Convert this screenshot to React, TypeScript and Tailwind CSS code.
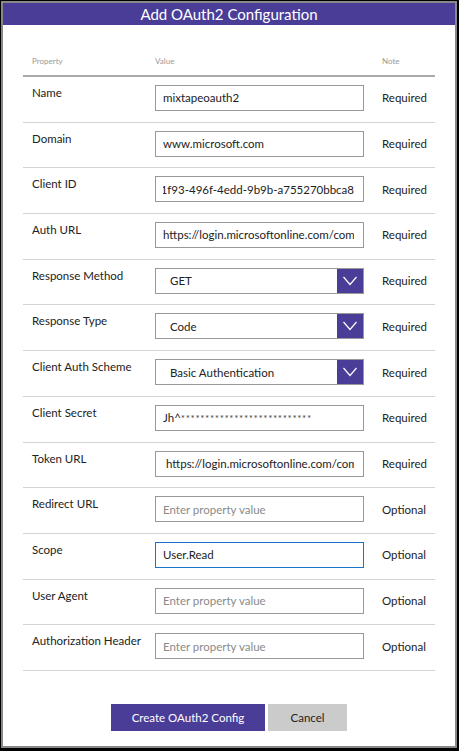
import React from 'react';

type Row = {
  label: string;
  value?: string;
  kind?: 'input' | 'select' | 'secret';
  note: 'Required' | 'Optional';
  alignEnd?: boolean;
  focused?: boolean;
  indent?: boolean;
};

const rows: Row[] = [
  { label: 'Name', value: 'mixtapeoauth2', note: 'Required' },
  { label: 'Domain', value: 'www.microsoft.com', note: 'Required' },
  { label: 'Client ID', value: 'b6521f93-496f-4edd-9b9b-a755270bbca8', note: 'Required', alignEnd: true },
  { label: 'Auth URL', value: 'https://login.microsoftonline.com/common', note: 'Required' },
  { label: 'Response Method', value: 'GET', kind: 'select', note: 'Required' },
  { label: 'Response Type', value: 'Code', kind: 'select', note: 'Required' },
  { label: 'Client Auth Scheme', value: 'Basic Authentication', kind: 'select', note: 'Required' },
  { label: 'Client Secret', value: 'Jh^', kind: 'secret', note: 'Required' },
  { label: 'Token URL', value: 'https://login.microsoftonline.com/common', note: 'Required', indent: true },
  { label: 'Redirect URL', note: 'Optional' },
  { label: 'Scope', value: 'User.Read', note: 'Optional', focused: true },
  { label: 'User Agent', note: 'Optional' },
  { label: 'Authorization Header', note: 'Optional' },
];

const Chevron = () => (
  <svg width="14" height="10" viewBox="0 0 14 10" fill="none">
    <polyline points="0.5,1 7,8.5 13.5,1" stroke="white" strokeWidth="1.2" />
  </svg>
);

const Field = ({ row }: { row: Row }) => {
  if (row.kind === 'select') {
    return (
      <div className="flex h-[26px] w-[209px] shrink-0 border border-[#999] bg-white">
        <div className="flex flex-1 items-center pl-[14px] text-[11.5px] text-[#222]">{row.value}</div>
        <div className="flex w-[26px] items-center justify-center bg-[#4a3d98]">
          <Chevron />
        </div>
      </div>
    );
  }

  const border = row.focused ? 'border-[#1a73c8]' : 'border-[#999]';

  return (
    <div
      className={`flex h-[26px] w-[209px] shrink-0 items-center border ${border} bg-white pr-[9px] ${
        row.indent ? 'pl-[10px]' : 'pl-[7px]'
      }`}
    >
      <div className={`flex min-w-0 flex-1 overflow-hidden ${row.alignEnd ? 'justify-end' : ''}`}>
        {row.kind === 'secret' ? (
          <span className="whitespace-nowrap text-[11.5px] text-[#222]">
            {row.value}
            <span className="text-[10px] tracking-[0.6px] text-[#444]">{'*'.repeat(27)}</span>
          </span>
        ) : row.value ? (
          <span className="shrink-0 whitespace-nowrap text-[11.5px] text-[#222]">{row.value}</span>
        ) : (
          <span className="whitespace-nowrap text-[11.5px] text-[#8a8a8a]">Enter property value</span>
        )}
      </div>
    </div>
  );
};

export default function App() {
  return (
    <div
      className="h-[751px] w-[459px] bg-black pb-[3px] pl-px pr-[2px] pt-px"
      style={{ fontFamily: '"Segoe UI", Lato, "Open Sans", sans-serif' }}
    >
      <div className="flex h-full flex-col border-2 border-[#888] bg-white">
        <div className="h-[22px] bg-[#4a3d98] text-center text-[15px] leading-[22px] text-white">
          Add OAuth2 Configuration
        </div>

        <div className="px-[20px]">
          <div className="flex h-[52px] items-end border-b-2 border-[#aaa] pb-[8px] text-[8px] text-[#999]">
            <div className="w-[132px] pl-[9px]">Property</div>
            <div className="w-[227px]">Value</div>
            <div>Note</div>
          </div>

          {rows.map((row) => (
            <div key={row.label} className="flex h-[45.7px] items-start border-b border-[#d4d4d4] pt-[8px]">
              <div className="w-[132px] shrink-0 pl-[9px] text-[11.5px] leading-[16px] text-[#222]">{row.label}</div>
              <Field row={row} />
              <div className="flex h-[26px] items-center pl-[18px] text-[11.5px] text-[#222]">{row.note}</div>
            </div>
          ))}
        </div>

        <div className="mt-[33px] flex justify-center gap-[3px]">
          <button className="h-[27px] w-[154px] bg-[#4a3d98] text-[11.5px] text-white">Create OAuth2 Config</button>
          <button className="h-[27px] w-[79px] bg-[#cbcbcb] text-[11.5px] text-[#222]">Cancel</button>
        </div>
      </div>
    </div>
  );
}
